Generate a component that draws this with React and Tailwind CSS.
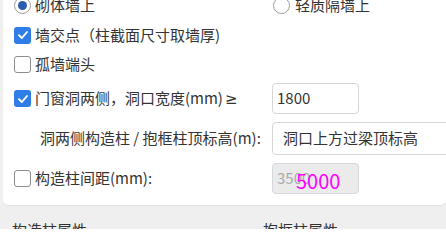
const FONT = { fontFamily: '"Noto Sans CJK SC", "Noto Sans", sans-serif' };

function Check({ checked }) {
  if (checked) {
    return (
      <span className="flex h-[17px] w-[17px] shrink-0 items-center justify-center rounded-[3px] bg-[#2f7de6]">
        <svg width="12" height="12" viewBox="0 0 12 12" fill="none">
          <path d="M2 6.2 L4.9 9 L10 3" stroke="white" strokeWidth="1.9" strokeLinecap="round" strokeLinejoin="round" />
        </svg>
      </span>
    );
  }
  return <span className="h-[17px] w-[17px] shrink-0 rounded-[3px] border border-[#8d8d8d] bg-white" />;
}

function Radio({ checked }) {
  return (
    <span className="flex h-[17px] w-[17px] shrink-0 items-center justify-center rounded-full border border-[#9a9a9a] bg-white">
      {checked && <span className="h-[9px] w-[9px] rounded-full bg-[#2a5db0]" />}
    </span>
  );
}

function Field({ children, disabled, wide }) {
  return (
    <div
      className={
        'relative flex shrink-0 items-center rounded-[4px] border px-[4px] text-[15px] ' +
        (disabled ? 'border-[#d3d7de] bg-[#ebebeb] text-[#aaaaaa] ' : 'border-[#d6d6d6] bg-white text-[#333] ') +
        (wide ? 'w-[190px] h-[33px] pl-[10px]' : 'w-[87px] h-[31px]')
      }
    >
      {children}
    </div>
  );
}

export default function App() {
  return (
    <div className="h-[229px] w-[446px] overflow-hidden bg-[#efefef] text-[#333]" style={FONT}>
      <div className="ml-[3px] -mt-[10px] rounded-b-[5px] bg-white pl-[11px] pb-[6px] shadow-[0_1px_1px_rgba(0,0,0,0.06)]">
        <div className="flex h-[30px] items-center">
          <label className="flex w-[259px] shrink-0 items-center gap-[4px] text-[15px]">
            <Radio checked />
            砌体墙上
          </label>
          <label className="flex items-center gap-[5px] text-[15px]">
            <Radio />
            轻质隔墙上
          </label>
        </div>

        <label className="flex h-[30px] items-center gap-[4px] text-[15px]">
          <Check checked />
          墙交点（柱截面尺寸取墙厚)
        </label>

        <label className="flex h-[28px] items-center gap-[4px] text-[15px]">
          <Check />
          孤墙端头
        </label>

        <div className="flex h-[41px] items-center">
          <label className="flex w-[258px] shrink-0 items-center gap-[4px] whitespace-nowrap text-[15px]">
            <Check checked />
            <span>
              门窗洞两侧，洞口宽度(mm)
              <span className="ml-[2px]" style={{ fontFamily: '"DejaVu Sans", sans-serif' }}>≥</span>
            </span>
          </label>
          <Field>1800</Field>
        </div>

        <div className="flex h-[39px] items-center">
          <span className="w-[258px] shrink-0 whitespace-nowrap pl-[26px] text-[15px]">洞两侧构造柱 / 抱框柱顶标高(m):</span>
          <Field wide>洞口上方过梁顶标高</Field>
        </div>

        <div className="flex h-[41px] items-center">
          <label className="flex w-[258px] shrink-0 items-center gap-[4px] text-[15px]">
            <Check />
            构造柱间距(mm):
          </label>
          <Field disabled>
            3500
            <span className="absolute left-[23px] top-[2px] text-[20px] text-[#ff00ff]">5000</span>
          </Field>
        </div>
      </div>

      <div className="flex pl-[12px] pt-[14px] text-[15px]">
        <span className="w-[251px]">构造柱属性</span>
        <span>抱框柱属性</span>
      </div>
    </div>
  );
}
